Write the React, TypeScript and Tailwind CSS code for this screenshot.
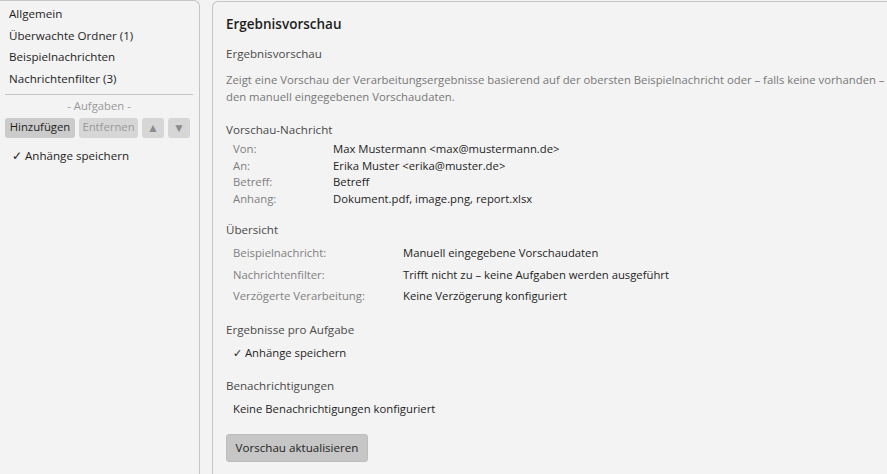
import React from 'react';

const font = { fontFamily: '"Segoe UI", "Open Sans", sans-serif' };

const navItems = ['Allgemein', 'Überwachte Ordner (1)', 'Beispielnachrichten', 'Nachrichtenfilter (3)'];

const message = [
  ['Von:', 'Max Mustermann <max@mustermann.de>'],
  ['An:', 'Erika Muster <erika@muster.de>'],
  ['Betreff:', 'Betreff'],
  ['Anhang:', 'Dokument.pdf, image.png, report.xlsx'],
];

const overview = [
  ['Beispielnachricht:', 'Manuell eingegebene Vorschaudaten'],
  ['Nachrichtenfilter:', 'Trifft nicht zu – keine Aufgaben werden ausgeführt'],
  ['Verzögerte Verarbeitung:', 'Keine Verzögerung konfiguriert'],
];

function SectionTitle({ children, className = '' }: { children: React.ReactNode; className?: string }) {
  return <div className={`text-[11.6px] leading-[18px] font-medium text-[#4a4a4a] ${className}`}>{children}</div>;
}

export default function App() {
  return (
    <div className="flex h-[474px] w-[887px] overflow-hidden bg-[#f3f3f3] text-[11.3px] text-[#1e1e1e]" style={font}>
      {/* Sidebar */}
      <div className="-ml-px w-[201px] shrink-0 border-r border-t border-[#c6c6c6] rounded-tr-[6px] pt-[2px]">
        {navItems.map(item => (
          <div key={item} className="pl-[10px] text-[11.6px] leading-[21.7px]">{item}</div>
        ))}
        <div className="mx-[6px] mt-[4px] border-t border-[#c6c6c6]" />
        <div className="mt-[3px] text-center leading-[16px] text-[#999]">- Aufgaben -</div>
        <div className="mt-[4px] flex gap-[4px] pl-[6px]">
          <button className="h-[20px] w-[70px] rounded-[3px] bg-[#cbcbcb] text-[11.3px] text-[#1e1e1e]">Hinzufügen</button>
          <button className="h-[20px] w-[59px] rounded-[3px] bg-[#d6d6d6] text-[11.3px] text-[#999]">Entfernen</button>
          <button className="flex h-[20px] w-[22px] items-center justify-center rounded-[3px] bg-[#d6d6d6] text-[12px] text-[#8c8c8c]">▲</button>
          <button className="flex h-[20px] w-[22px] items-center justify-center rounded-[3px] bg-[#d6d6d6] text-[12px] text-[#8c8c8c]">▼</button>
        </div>
        <div className="mt-[7px] pl-[13px] text-[11.6px] leading-[22px]">✓ Anhänge speichern</div>
      </div>

      {/* Main panel */}
      <div className="ml-[12px] mt-px flex-1 border-l border-t border-[#c6c6c6] rounded-tl-[6px] pl-[13px] pt-[12px]">
        <div className="text-[13.5px] leading-[20px] font-semibold">Ergebnisvorschau</div>
        <SectionTitle className="mt-[11px]">Ergebnisvorschau</SectionTitle>
        <p className="mt-[8px] whitespace-nowrap leading-[17px] text-[#777]">
          Zeigt eine Vorschau der Verarbeitungsergebnisse basierend auf der obersten Beispielnachricht oder – falls keine vorhanden –
          <br />
          den manuell eingegebenen Vorschaudaten.
        </p>

        <SectionTitle className="mt-[16px]">Vorschau-Nachricht</SectionTitle>
        <div className="mt-[2px] pl-[7px]">
          {message.map(([label, value]) => (
            <div key={label} className="flex leading-[16.5px]">
              <span className="w-[100px] shrink-0 text-[#808080]">{label}</span>
              <span>{value}</span>
            </div>
          ))}
        </div>

        <SectionTitle className="mt-[14px]">Übersicht</SectionTitle>
        <div className="mt-[3px] pl-[7px]">
          {overview.map(([label, value]) => (
            <div key={label} className="flex leading-[21.5px]">
              <span className="w-[170px] shrink-0 text-[#808080]">{label}</span>
              <span>{value}</span>
            </div>
          ))}
        </div>

        <SectionTitle className="mt-[14px]">Ergebnisse pro Aufgabe</SectionTitle>
        <div className="mt-[3px] pl-[7px] leading-[22px]">✓ Anhänge speichern</div>

        <SectionTitle className="mt-[13px]">Benachrichtigungen</SectionTitle>
        <div className="mt-[3px] pl-[7px] leading-[22px]">Keine Benachrichtigungen konfiguriert</div>

        <button className="mt-[14px] h-[28px] w-[142px] rounded-[3px] border border-[#bdbdbd] bg-[#c6c6c6] text-[11.6px] text-[#1e1e1e]">
          Vorschau aktualisieren
        </button>
      </div>
    </div>
  );
}
